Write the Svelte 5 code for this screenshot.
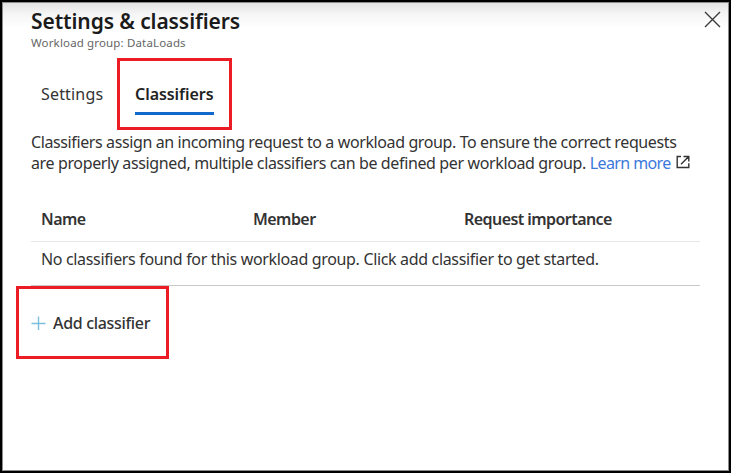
<script>
  const columns = ['Name', 'Member', 'Request importance'];
</script>

<main class="panel">
  <header>
    <div>
      <h1>Settings &amp; classifiers</h1>
      <p class="subtitle">Workload group: DataLoads</p>
    </div>
    <button class="close" aria-label="Close">
      <svg width="17" height="17" viewBox="0 0 17 17"><path d="M1 1L16 16M16 1L1 16" stroke="#3b3b3b" stroke-width="1.4" fill="none" /></svg>
    </button>
  </header>

  <nav>
    <button class="tab">Settings</button>
    <button class="tab active">Classifiers</button>
  </nav>

  <div class="intro">
    <div class="l1">Classifiers assign an incoming request to a workload group. To ensure the correct requests</div>
    <div class="l2">
      <span>are properly assigned, multiple classifiers can be defined per workload group. <a href="#learn">Learn more</a></span>
      <svg width="14" height="14" viewBox="0 0 14 14"><path d="M5 1.5H1.2V12.5H12.8V8.2M7.5 1.5H12.8V6.5M12.5 1.8L5 9.3" stroke="#333" stroke-width="1.4" fill="none" /></svg>
    </div>
  </div>

  <section class="table">
    <div class="head">
      {#each columns as column}<span>{column}</span>{/each}
    </div>
    <div class="empty"><span>No classifiers found for this workload group. Click add classifier to get started.</span></div>
  </section>

  <button class="add">
    <svg width="15" height="15" viewBox="0 0 15 15"><path d="M7.5 0.5V14M0.5 7.5H14.5" stroke="#7cbfdc" stroke-width="1.4" fill="none" /></svg>
    <span>Add classifier</span>
  </button>

  <div class="mark mark-tab"></div>
  <div class="mark mark-add"></div>
</main>

<style>
  .panel {
    position: relative;
    box-sizing: border-box;
    width: 731px;
    height: 473px;
    overflow: hidden;
    border: 2px solid #000;
    padding: 6px 8px 0 29px;
    background: linear-gradient(#e2e2e2, #f5f5f5 12px, #fff 26px);
    box-shadow: inset 0 0 0 1px #8c8c8c;
    font-family: "Segoe UI", "Noto Sans", "Open Sans", sans-serif;
    font-size: 16px;
    color: #333;
  }
  header { display: flex; justify-content: space-between; height: 71px; }
  h1 { margin: 0; font-size: 21px; line-height: 26px; font-weight: 600; color: #1b1b1b; letter-spacing: -0.1px; white-space: nowrap; }
  .subtitle { margin: 0; font-size: 11.5px; line-height: 17px; color: #666; letter-spacing: 0.15px; white-space: nowrap; }
  button { border: 0; padding: 0; background: none; font: inherit; color: inherit; }
  .close { width: 17px; height: 17px; margin-top: 3px; }
  svg { display: block; flex: none; }
  nav { display: flex; gap: 32px; padding-left: 10px; height: 53px; }
  .tab { width: 62px; height: 36px; line-height: 27px; padding-bottom: 6px; text-align: left; white-space: nowrap; letter-spacing: 0.17px; box-sizing: border-box; }
  .tab.active { width: 79px; font-weight: 600; color: #222; border-bottom: 3px solid #1169cc; padding: 0 0 3px; letter-spacing: -0.05px; }
  .intro { height: 68px; line-height: 21px; white-space: nowrap; }
  .l1 { letter-spacing: -0.39px; }
  .l2 { display: flex; gap: 5px; align-items: center; letter-spacing: -0.37px; }
  .l2 svg { margin-top: -4px; }
  a { color: #3a78dc; text-decoration: none; letter-spacing: -0.6px; }
  .table { width: 669px; }
  .head { display: grid; grid-template-columns: 212px 211px 1fr; height: 42px; line-height: 38px; padding-left: 10px; border-bottom: 1px solid #e6e6e6; font-weight: 600; box-sizing: border-box; letter-spacing: -0.56px; }
  .empty { height: 44px; line-height: 35px; padding-left: 10px; border-bottom: 1px solid #c8c8c8; box-sizing: border-box; letter-spacing: -0.34px; white-space: nowrap; }
  .add { display: flex; align-items: center; gap: 7px; margin-top: 26px; height: 22px; font-weight: 500; letter-spacing: -0.32px; }
  .mark { position: absolute; box-sizing: border-box; border: 3px solid #ec1c24; }
  .mark-tab { left: 115px; top: 56px; width: 115px; height: 72px; }
  .mark-add { left: 14px; top: 284px; width: 153px; height: 73px; }
</style>
